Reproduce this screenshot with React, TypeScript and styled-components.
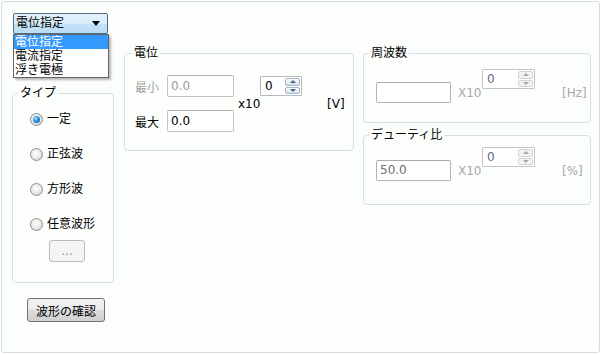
import styled, { createGlobalStyle, css } from 'styled-components';

const GlobalStyle = createGlobalStyle`
  html, body {
    margin: 0;
    padding: 0;
    background: #ffffff;
  }
  body {
    font-family: "DejaVu Sans", "Noto Sans CJK JP", sans-serif;
    font-size: 12px;
    color: #000000;
  }
`;

const Frame = styled.div`
  box-sizing: border-box;
  width: 599px;
  height: 352px;
  margin: 1px;
  border: 1px solid #d3dde6;
  border-radius: 3px;
  background: #fcfefc;
  display: flex;
  align-items: flex-start;
`;

const Column = styled.div<{ $width: number; $left: number }>`
  width: ${({ $width }) => $width}px;
  margin-left: ${({ $left }) => $left}px;
  display: flex;
  flex-direction: column;
  align-items: flex-start;
`;

const Combo = styled.div`
  position: relative;
  box-sizing: border-box;
  width: 95px;
  height: 21px;
  margin: 11px 0 0 1px;
  padding: 0 7px 0 2px;
  border: 1px solid #4f6d88;
  border-radius: 2px;
  background: linear-gradient(#e6f3fc 0%, #d6ecfa 50%, #c4e3f7 51%, #b9ddf5 100%);
  display: flex;
  align-items: center;
  justify-content: space-between;
  line-height: 19px;
`;

const ComboArrow = styled.span`
  width: 0;
  height: 0;
  border-left: 4px solid transparent;
  border-right: 4px solid transparent;
  border-top: 5px solid #000000;
`;

const ComboList = styled.ul`
  position: absolute;
  top: 20px;
  left: -1px;
  z-index: 2;
  box-sizing: border-box;
  width: 96px;
  margin: 0;
  padding: 0;
  list-style: none;
  border: 1px solid #646464;
  background: #ffffff;
  box-shadow: 2px 2px 2px rgba(0, 0, 0, 0.28);
`;

const ComboItem = styled.li<{ $selected?: boolean }>`
  height: 14px;
  line-height: 14px;
  padding-left: 1px;
  background: ${({ $selected }) => ($selected ? '#3399ff' : 'transparent')};
  color: ${({ $selected }) => ($selected ? '#ffffff' : '#000000')};
`;

const Group = styled.fieldset<{ $height: number; $top: number }>`
  box-sizing: border-box;
  width: 100%;
  height: ${({ $height }) => $height}px;
  margin: ${({ $top }) => $top}px 0 0 0;
  padding: 0;
  min-width: 0;
  border: 1px solid #d5dfe5;
  border-radius: 4px;
`;

const Legend = styled.legend<{ $left: number }>`
  margin-left: ${({ $left }) => $left}px;
  padding: 0 2px;
  font-size: 12px;
  line-height: 14px;
`;

const RadioList = styled.div`
  display: flex;
  flex-direction: column;
  gap: 21px;
  padding: 12px 0 0 17px;
`;

const RadioRow = styled.label`
  display: flex;
  align-items: center;
  gap: 4px;
  height: 14px;
  line-height: 14px;
`;

const RadioDot = styled.span<{ $checked?: boolean }>`
  box-sizing: border-box;
  width: 13px;
  height: 13px;
  border-radius: 50%;
  border: 1px solid #8e8f8f;
  background: radial-gradient(circle at 45% 40%, #ffffff 0%, #ececec 45%, #c9c9c9 100%);
  display: flex;
  align-items: center;
  justify-content: center;

  ${({ $checked }) =>
    $checked &&
    css`
      &::after {
        content: '';
        width: 7px;
        height: 7px;
        border-radius: 50%;
        background: radial-gradient(circle at 38% 35%, #a8e4ff 0%, #2d8fe0 45%, #0b4b8c 100%);
      }
    `}
`;

const Button = styled.div<{ $width: number; $height: number; $disabled?: boolean }>`
  box-sizing: border-box;
  width: ${({ $width }) => $width}px;
  height: ${({ $height }) => $height}px;
  border: 1px solid ${({ $disabled }) => ($disabled ? '#b8bcc0' : '#707070')};
  border-radius: 3px;
  background: ${({ $disabled }) =>
    $disabled ? '#f4f4f4' : 'linear-gradient(#f2f2f2 0%, #ebebeb 50%, #dddddd 51%, #cfcfcf 100%)'};
  color: ${({ $disabled }) => ($disabled ? '#9a9a9a' : '#000000')};
  display: flex;
  align-items: center;
  justify-content: center;
`;

const MoreButton = styled(Button)`
  margin: 9px 0 0 36px;
  line-height: 12px;
`;

const ConfirmButton = styled(Button)`
  margin: 15px 0 0 15px;
`;

const GroupBody = styled.div<{ $top: number; $left: number }>`
  display: flex;
  padding: ${({ $top, $left }) => `${$top}px 0 0 ${$left}px`};
`;

const FieldStack = styled.div`
  display: flex;
  flex-direction: column;
  gap: 13px;
`;

const FieldRow = styled.div`
  display: flex;
  align-items: center;
`;

const FieldLabel = styled.span<{ $muted?: boolean }>`
  width: 32px;
  color: ${({ $muted }) => ($muted ? '#a0a0a0' : '#000000')};
`;

const TextBox = styled.div<{ $width: number; $height: number; $muted?: boolean; $disabled?: boolean }>`
  box-sizing: border-box;
  width: ${({ $width }) => $width}px;
  height: ${({ $height }) => $height}px;
  padding-left: 3px;
  border: 1px solid ${({ $disabled }) => ($disabled ? '#b4b4b4' : '#c3c3c3')};
  border-top-color: ${({ $disabled }) => ($disabled ? '#a9a9a9' : '#b0b0b0')};
  border-radius: 2px;
  background: #ffffff;
  color: ${({ $muted, $disabled }) => ($disabled ? '#6f6f6f' : $muted ? '#9a9a9a' : '#000000')};
  line-height: ${({ $height }) => $height - 2}px;
`;

const Multiplier = styled.span<{ $muted?: boolean; $left: number; $width: number }>`
  width: ${({ $width }) => $width}px;
  margin-left: ${({ $left }) => $left}px;
  color: ${({ $muted }) => ($muted ? '#a8a8a8' : '#000000')};
`;

const Unit = styled.span<{ $muted?: boolean; $left: number }>`
  margin-left: ${({ $left }) => $left}px;
  color: ${({ $muted }) => ($muted ? '#a8a8a8' : '#000000')};
`;

const CenterSlot = styled.div`
  align-self: center;
  display: flex;
`;

const TopSlot = styled.div<{ $top?: number }>`
  align-self: flex-start;
  margin-top: ${({ $top }) => $top ?? 0}px;
`;

const Spin = styled.div<{ $width: number; $disabled?: boolean }>`
  box-sizing: border-box;
  width: ${({ $width }) => $width}px;
  height: 20px;
  padding: 1px;
  border: 1px solid ${({ $disabled }) => ($disabled ? '#c4c4c4' : '#b5b8be')};
  border-radius: 1px;
  background: #ffffff;
  display: flex;
`;

const SpinValue = styled.span<{ $disabled?: boolean }>`
  flex: 1;
  padding-left: 3px;
  line-height: 16px;
  color: ${({ $disabled }) => ($disabled ? '#5f6a86' : '#000000')};
`;

const SpinButtons = styled.div`
  width: 15px;
  display: flex;
  flex-direction: column;
  gap: 1px;
`;

const SpinButton = styled.div<{ $disabled?: boolean }>`
  box-sizing: border-box;
  flex: 1;
  border: 1px solid ${({ $disabled }) => ($disabled ? '#d2d2d2' : '#a9b6c5')};
  border-radius: 2px;
  background: ${({ $disabled }) =>
    $disabled ? '#f3f3f3' : 'linear-gradient(#fafcfe 0%, #e7edf4 50%, #d8e2ec 100%)'};
  display: flex;
  align-items: center;
  justify-content: center;
`;

const SpinArrow = styled.span<{ $down?: boolean; $disabled?: boolean }>`
  width: 0;
  height: 0;
  border-left: 3px solid transparent;
  border-right: 3px solid transparent;
  ${({ $down, $disabled }) => {
    const color = $disabled ? '#a8a8a8' : '#4a6288';
    return $down ? `border-top: 3px solid ${color};` : `border-bottom: 3px solid ${color};`;
  }}
`;

const ParamRow = styled.div<{ $top: number }>`
  display: flex;
  align-items: flex-end;
  height: 34px;
  padding: ${({ $top }) => $top}px 0 0 12px;
`;

const TailSlot = styled.div`
  display: flex;
  align-items: center;
  height: 21px;
`;

type SpinBoxProps = { width: number; value: string; disabled?: boolean };

const SpinBox = ({ width, value, disabled }: SpinBoxProps) => (
  <Spin $width={width} $disabled={disabled}>
    <SpinValue $disabled={disabled}>{value}</SpinValue>
    <SpinButtons>
      <SpinButton $disabled={disabled}>
        <SpinArrow $disabled={disabled} />
      </SpinButton>
      <SpinButton $disabled={disabled}>
        <SpinArrow $down $disabled={disabled} />
      </SpinButton>
    </SpinButtons>
  </Spin>
);

type ParamGroupProps = { title: string; value: string; unit: string; top: number; height: number; rowTop: number };

const ParamGroup = ({ title, value, unit, top, height, rowTop }: ParamGroupProps) => (
  <Group $height={height} $top={top}>
    <Legend $left={5}>{title}</Legend>
    <ParamRow $top={rowTop}>
      <TextBox $width={75} $height={21} $muted $disabled>
        {value}
      </TextBox>
      <TailSlot>
        <Multiplier $muted $left={7} $width={24}>
          X10
        </Multiplier>
      </TailSlot>
      <TopSlot>
        <SpinBox width={53} value="0" disabled />
      </TopSlot>
      <TailSlot>
        <Unit $muted $left={27}>
          {unit}
        </Unit>
      </TailSlot>
    </ParamRow>
  </Group>
);

const waveTypes = ['一定', '正弦波', '方形波', '任意波形'];
const modes = ['電位指定', '電流指定', '浮き電極'];

export default function App() {
  return (
    <>
      <GlobalStyle />
      <Frame>
        <Column $width={102} $left={10}>
          <Combo>
            <span>電位指定</span>
            <ComboArrow />
            <ComboList>
              {modes.map((m, i) => (
                <ComboItem key={m} $selected={i === 0}>
                  {m}
                </ComboItem>
              ))}
            </ComboList>
          </Combo>
          <Group $height={197} $top={52}>
            <Legend $left={5}>タイプ</Legend>
            <RadioList>
              {waveTypes.map((t, i) => (
                <RadioRow key={t}>
                  <RadioDot $checked={i === 0} />
                  {t}
                </RadioRow>
              ))}
            </RadioList>
            <MoreButton $width={36} $height={22} $disabled>
              ...
            </MoreButton>
          </Group>
          <ConfirmButton $width={78} $height={24}>
            波形の確認
          </ConfirmButton>
        </Column>

        <Column $width={230} $left={10}>
          <Group $height={105} $top={44}>
            <Legend $left={7}>電位</Legend>
            <GroupBody $top={15} $left={10}>
              <FieldStack>
                <FieldRow>
                  <FieldLabel $muted>最小</FieldLabel>
                  <TextBox $width={67} $height={22} $muted>
                    0.0
                  </TextBox>
                </FieldRow>
                <FieldRow>
                  <FieldLabel>最大</FieldLabel>
                  <TextBox $width={67} $height={22}>
                    0.0
                  </TextBox>
                </FieldRow>
              </FieldStack>
              <CenterSlot>
                <Multiplier $left={4} $width={22}>
                  x10
                </Multiplier>
              </CenterSlot>
              <TopSlot $top={1}>
                <SpinBox width={42} value="0" />
              </TopSlot>
              <CenterSlot>
                <Unit $left={25}>[V]</Unit>
              </CenterSlot>
            </GroupBody>
          </Group>
        </Column>

        <Column $width={228} $left={9}>
          <ParamGroup title="周波数" value="" unit="[Hz]" top={44} height={77} rowTop={9} />
          <ParamGroup title="デューティ比" value="50.0" unit="[%]" top={5} height={77} rowTop={5} />
        </Column>
      </Frame>
    </>
  );
}
